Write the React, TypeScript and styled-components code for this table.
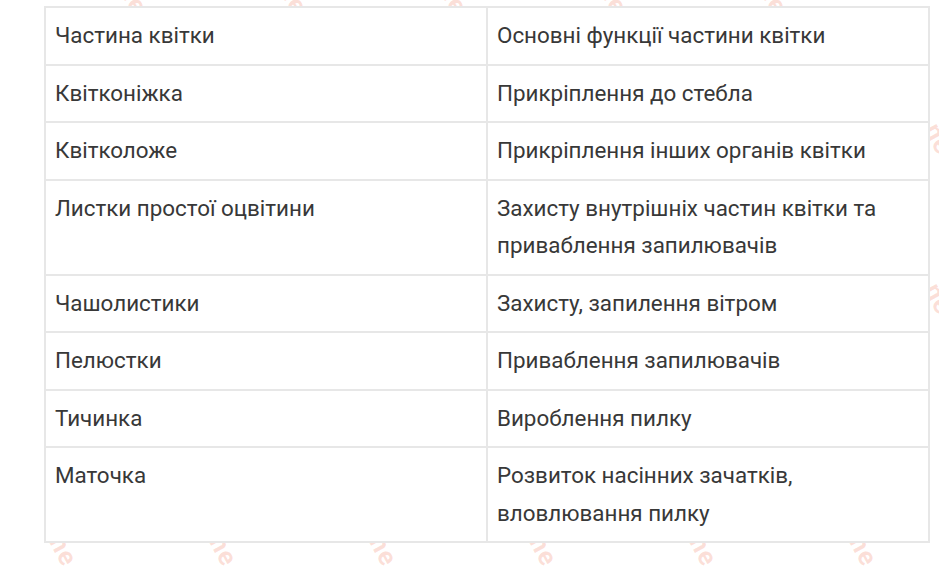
import React from "react";
import styled, { createGlobalStyle } from "styled-components";

const GlobalStyle = createGlobalStyle`
  html, body {
    margin: 0;
    padding: 0;
    background: #ffffff;
  }
  body {
    font-family: Roboto, "Noto Sans", "Liberation Sans", sans-serif;
    color: #333333;
  }
`;

const Page = styled.div`
  position: relative;
  width: 939px;
  height: 573px;
  overflow: hidden;
  padding: 6px 0 0 44px;
  box-sizing: border-box;
  background: #ffffff;
`;

const Watermark = styled.span`
  position: absolute;
  font-family: Roboto, "Liberation Sans", sans-serif;
  font-weight: 700;
  font-size: 26px;
  letter-spacing: 1px;
  color: rgba(240, 110, 80, 0.22);
  transform: rotate(62deg);
  transform-origin: left top;
  pointer-events: none;
  white-space: nowrap;
`;

const Table = styled.table`
  position: relative;
  z-index: 1;
  width: 884px;
  border-collapse: collapse;
  table-layout: fixed;
  background: #ffffff;
  font-size: 22.4px;
  line-height: 37.5px;
`;

const Col = styled.col<{ $w: number }>`
  width: ${(p) => p.$w}px;
`;

const Cell = styled.td`
  border: 2px solid #e7e7e7;
  padding: 9px 9px 9px 9px;
  vertical-align: top;
  text-align: left;
  color: #383838;
  overflow-wrap: break-word;
`;

const rows: [string, string][] = [
  ["Частина квітки", "Основні функції частини квітки"],
  ["Квітконіжка", "Прикріплення до стебла"],
  ["Квітколоже", "Прикріплення інших органів квітки"],
  ["Листки простої оцвітини", "Захисту внутрішніх частин квітки та приваблення запилювачів"],
  ["Чашолистики", "Захисту, запилення вітром"],
  ["Пелюстки", "Приваблення запилювачів"],
  ["Тичинка", "Вироблення пилку"],
  ["Маточка", "Розвиток насінних зачатків, вловлювання пилку"],
];

const marks: { x: number; y: number }[] = [
  ...[140, 300, 460, 620, 780].map((x) => ({ x, y: -22 })),
  { x: 945, y: 118 },
  { x: 945, y: 278 },
  ...[70, 230, 390, 550, 710, 870].map((x) => ({ x, y: 530 })),
];

export default function App() {
  return (
    <>
      <GlobalStyle />
      <Page>
        {marks.map((m, i) => (
          <Watermark key={i} style={{ left: m.x, top: m.y }}>
            ne
          </Watermark>
        ))}
        <Table>
          <colgroup>
            <Col $w={442} />
            <Col $w={442} />
          </colgroup>
          <tbody>
            {rows.map(([a, b], i) => (
              <tr key={i}>
                <Cell>{a}</Cell>
                <Cell>{b}</Cell>
              </tr>
            ))}
          </tbody>
        </Table>
      </Page>
    </>
  );
}
